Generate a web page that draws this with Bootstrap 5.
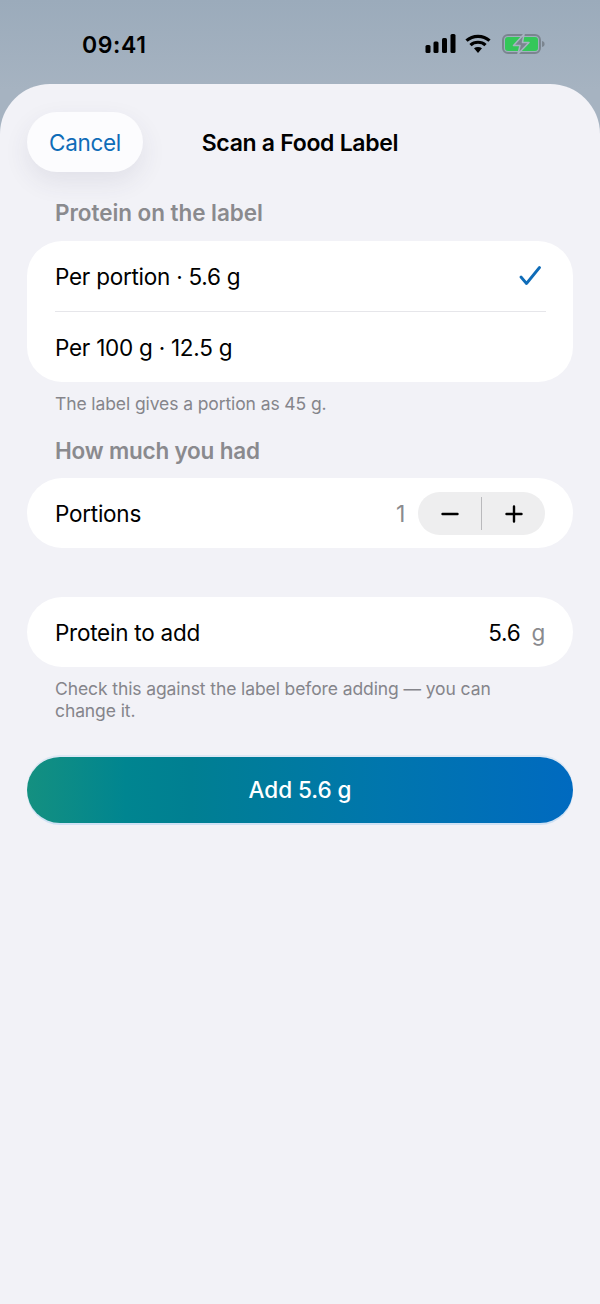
<!DOCTYPE html>
<html lang="en">
<head>
<meta charset="utf-8">
<title>Scan a Food Label</title>
<link href="https://cdn.jsdelivr.net/npm/bootstrap@5.3.0/dist/css/bootstrap.min.css" rel="stylesheet">
<style>
html,body{margin:0;height:1304px;overflow:hidden}
body{font-family:Inter,"Liberation Sans",sans-serif;background:linear-gradient(180deg,#9babbb 0,#a6b3c1 90px);color:#000;-webkit-font-smoothing:antialiased}
.status-row{height:84px;padding:0 55px 0 82px}
.clock{font-size:23px;font-weight:600;line-height:28px;margin-top:31px;letter-spacing:.6px}
.status-icons{margin-top:34px;height:22px;gap:9px}
.batt-icon{margin-left:2px}
.sheet-panel{height:1220px;background:#f2f2f7;border-radius:50px 50px 0 0;padding:28px 27px 0;position:relative}
.head-row{height:60px;position:relative}
.cancel-pill{width:116px;height:60px;border-radius:30px;background:#fcfcfe;color:#0f6cb8;font-size:22.5px;letter-spacing:-.3px;border:0;padding:2px 0 0;box-shadow:0 10px 26px rgba(60,60,90,.09)}
.sheet-title{position:absolute;left:0;right:0;top:0;line-height:60px;padding-top:1px;text-align:center;font-size:23px;font-weight:600;letter-spacing:-.3px;pointer-events:none}
.sec-label{font-size:22.5px;font-weight:600;color:#8a8a8e;line-height:28px;padding-left:28px;letter-spacing:-.2px;margin-top:22px}
.label-first{margin-top:27px;letter-spacing:-.05px}
.white-box{background:#fff;border-radius:35px;padding:0 28px;margin-top:13px}
.label-first + .white-box{margin-top:14px}
.box-second{margin-top:49px}
.box-row{height:70px;padding-top:2px;font-size:22.5px;line-height:28px;letter-spacing:-.25px}
.row-first{border-bottom:1px solid #e6e6ea;margin-right:-1px;height:70.5px}
.foot-note{font-size:17.5px;line-height:22px;color:#85858b;padding-left:28px;letter-spacing:-.1px;margin-top:11px}
.qty-val{color:#8a8a8e;font-size:23px;margin-right:13px}
.stepper{width:127px;height:43px;border-radius:22px;background:#eeeeef}
.step-half{flex:1 1 0}
.step-sep{width:1px;height:33px;background:#b9b9bc}
.unit-txt{color:#8a8a8e;margin-left:11px}
.add-btn{display:block;width:546px;height:66px;margin-top:35px;border-radius:33px;border:0;background:linear-gradient(90deg,#149080 0,#008590 18%,#007f92 30%,#0076ad 65%,#006ac0 100%);box-shadow:0 2px 0 #cfe1f4,0 -2px 0 #dce7f3;color:#fff;font-size:22.5px;font-weight:500;padding:0;letter-spacing:-.05px}
.check-mark{margin-right:5px;margin-top:-2px}
</style>
</head>
<body>
<div class="d-flex justify-content-between status-row">
  <div class="clock">09:41</div>
  <div class="d-flex align-items-start status-icons">
    <svg width="31" height="20" viewBox="0 0 31 20"><g fill="#000"><rect x="0.500" y="11" width="5" height="8" rx="1.500"/><rect x="8.500" y="7.500" width="5" height="11.500" rx="1.500"/><rect x="17" y="4" width="5" height="15" rx="1.500"/><rect x="25.500" y="0" width="5" height="19" rx="1.500"/></g></svg>
    <svg width="26" height="20" viewBox="0 0 26 20"><g fill="none" stroke="#000" stroke-width="3.200"><path d="M1.500 6.700C7.800.8 18.200.8 24.500 6.700"/><path d="M5.500 11.100C9.500 7.300 16.500 7.300 20.500 11.100"/></g><path d="M9 14.200C11.300 12.500 14.700 12.500 17 14.200L13 19Z" fill="#000"/></svg>
    <svg class="batt-icon" width="43" height="20" viewBox="0 0 43 20"><rect x="1" y="1" width="37" height="18" rx="5" fill="none" stroke="#7b858f" stroke-width="2"/><rect x="3" y="3" width="33" height="14" rx="3" fill="#34c759"/><path d="M40 7v6c1.800-.3 2.600-1.500 2.600-3S41.800 7.300 40 7z" fill="#7b858f"/><path d="M22 0 11.500 11.500H18L16 20 27 8.500H20.500Z" fill="#7b858f" stroke="#a6b3c1" stroke-width="1.500" stroke-linejoin="round"/></svg>
  </div>
</div>
<div class="sheet-panel">
  <div class="head-row">
    <button type="button" class="btn cancel-pill">Cancel</button>
    <div class="sheet-title">Scan a Food Label</div>
  </div>
  <div class="sec-label label-first">Protein on the label</div>
  <div class="white-box">
    <div class="d-flex align-items-center justify-content-between box-row row-first">
      <span>Per portion · 5.6 g</span>
      <svg width="24" height="24" viewBox="0 0 24 24" class="check-mark"><path d="M4 13 9.500 19.500 22.500 3.500" fill="none" stroke="#0f6cb8" stroke-width="2.800" stroke-linecap="round" stroke-linejoin="round"/></svg>
    </div>
    <div class="d-flex align-items-center box-row"><span>Per 100 g · 12.5 g</span></div>
  </div>
  <div class="foot-note">The label gives a portion as 45 g.</div>
  <div class="sec-label">How much you had</div>
  <div class="white-box">
    <div class="d-flex align-items-center box-row">
      <span class="me-auto">Portions</span>
      <span class="qty-val">1</span>
      <div class="d-flex align-items-center stepper">
        <div class="step-half d-flex justify-content-center"><svg width="20" height="20" viewBox="0 0 20 20"><path d="M2.500 10h15" stroke="#000" stroke-width="2.400" stroke-linecap="round"/></svg></div>
        <div class="step-sep"></div>
        <div class="step-half d-flex justify-content-center"><svg width="20" height="20" viewBox="0 0 20 20"><path d="M2.500 10h15M10 2.500v15" stroke="#000" stroke-width="2.400" stroke-linecap="round"/></svg></div>
      </div>
    </div>
  </div>
  <div class="white-box box-second">
    <div class="d-flex align-items-center box-row">
      <span class="me-auto">Protein to add</span>
      <span>5.6</span><span class="unit-txt">g</span>
    </div>
  </div>
  <div class="foot-note">Check this against the label before adding — you can<br>change it.</div>
  <button type="button" class="btn add-btn">Add 5.6 g</button>
</div>
</body>
</html>
